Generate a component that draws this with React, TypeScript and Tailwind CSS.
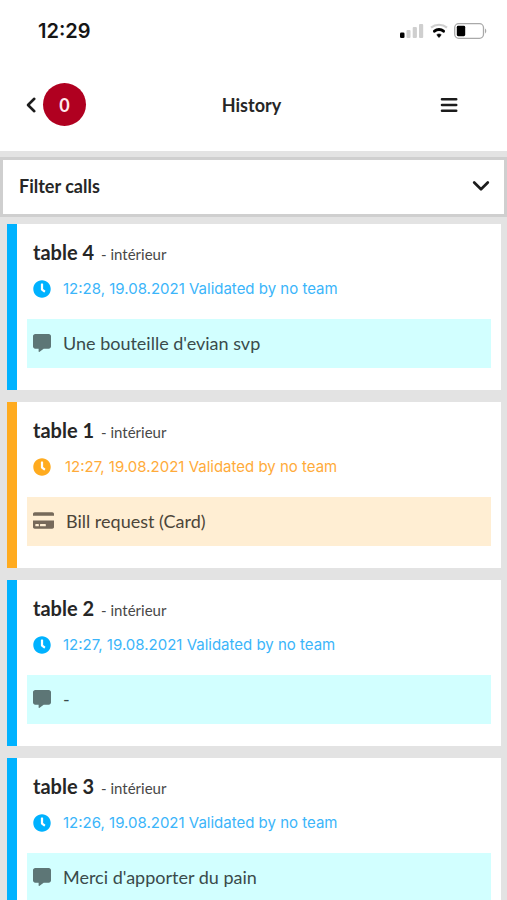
import { FaClock, FaCommentAlt, FaCreditCard } from 'react-icons/fa';
import clsx from 'clsx';

interface Call {
  id: number;
  table: string;
  area: string;
  time: string;
  kind: 'message' | 'bill';
  text: string;
}

const CALLS: Call[] = [
  { id: 1, table: 'table 4', area: 'intérieur', time: '12:28, 19.08.2021', kind: 'message', text: "Une bouteille d'evian svp" },
  { id: 2, table: 'table 1', area: 'intérieur', time: '12:27, 19.08.2021', kind: 'bill', text: 'Bill request (Card)' },
  { id: 3, table: 'table 2', area: 'intérieur', time: '12:27, 19.08.2021', kind: 'message', text: '-' },
  { id: 4, table: 'table 3', area: 'intérieur', time: '12:26, 19.08.2021', kind: 'message', text: "Merci d'apporter du pain" },
];

function StatusBar() {
  return (
    <div className="flex h-15 items-center justify-between pt-[2px] pr-5 pl-[38px]">
      <span className="font-['Inter',sans-serif] text-xl font-semibold text-[#161616]">12:29</span>
      <div className="flex items-center gap-[6px]">
        {/* Signal */}
        <svg width="24" height="16" viewBox="0 0 24 16" aria-hidden="true">
          <rect x="0" y="9.5" width="4.5" height="5.5" rx="1.3" fill="#000" />
          <rect x="6.5" y="7" width="4" height="8" rx="1" fill="#cfcfcf" />
          <rect x="12.7" y="4" width="4.2" height="11" rx="1" fill="#cfcfcf" />
          <rect x="19" y="1" width="4.2" height="14" rx="1" fill="#cfcfcf" />
        </svg>
        {/* Wi-Fi */}
        <svg width="18" height="16" viewBox="0 0 18 16" fill="none" aria-hidden="true">
          <path d="M1 4.6C5.6.8 12.4.8 17 4.6" stroke="#cfcfcf" strokeWidth="2.2" />
          <path d="M4.5 8.2C7 6 11 6 13.5 8.2" stroke="#000" strokeWidth="3" strokeLinecap="round" />
          <path d="M6.8 11.7C8 10.7 10 10.7 11.2 11.7L9.4 14.2Q9 14.7 8.6 14.2Z" fill="#000" stroke="#000" strokeWidth="0.6" strokeLinejoin="round" />
        </svg>
        {/* Battery */}
        <svg width="33" height="16" viewBox="0 0 33 16" fill="none" aria-hidden="true">
          <rect x="0.7" y="0.7" width="28.8" height="14.6" rx="4" stroke="#a9a9a9" strokeWidth="1.3" />
          <rect x="2.8" y="2.8" width="8.4" height="10.4" rx="1.4" fill="#000" />
          <path d="M31 5.6C32.7 6.3 32.7 9.7 31 10.4Z" fill="#a9a9a9" />
        </svg>
      </div>
    </div>
  );
}

function Header() {
  return (
    <header className="grid h-[91px] grid-cols-[1fr_auto_1fr] items-center pr-7 pb-[2px] pl-6">
      <div className="flex items-center gap-1">
        <button type="button" aria-label="Back" className="flex h-10 items-center">
          <svg width="15" height="18" viewBox="0 0 15 18" fill="none" aria-hidden="true">
            <path d="M10.3 2.8L4 9L10.3 15.2" stroke="#1c1c1c" strokeWidth="2.6" strokeLinecap="round" strokeLinejoin="round" />
          </svg>
        </button>
        <span className="flex size-[43px] items-center justify-center rounded-full bg-[#b00020] text-lg font-bold text-[#ffe9ec]">
          0
        </span>
      </div>
      <h1 className="text-lg font-bold">History</h1>
      <button type="button" aria-label="Menu" className="mr-5 justify-self-end">
        <svg width="20" height="20" viewBox="0 0 20 20" aria-hidden="true">
          <path d="M3 4.3H17.2M3 10H17.2M3 15.8H17.2" stroke="#1c1c1c" strokeWidth="2.6" strokeLinecap="round" />
        </svg>
      </button>
    </header>
  );
}

function CallCard({ call }: { call: Call }) {
  const isBill = call.kind === 'bill';

  return (
    <li className={clsx('border-l-10 bg-white pt-3 pr-[10px] pb-[22px] pl-[10px]', isBill ? 'border-[#ffab1f]' : 'border-[#00b2ff]')}>
      <h2 className="flex h-8 items-baseline gap-[7px] pl-[6px] text-[20px] leading-8 font-bold">
        {call.table}
        <span className="text-[15px] font-normal text-[#484848]">- {call.area}</span>
      </h2>
      <p
        className={clsx(
          "mt-[9px] flex h-6 items-center pl-[6px] font-['Inter',sans-serif] text-[15px]",
          isBill ? 'gap-[14px] text-[#ffab3a]' : 'gap-3 text-[#3bb5fa]',
        )}
      >
        <FaClock className={clsx('size-[18px] shrink-0', isBill ? 'text-[#ffab1f]' : 'text-[#00b2ff]')} />
        {call.time} Validated by no team
      </p>
      <div
        className={clsx(
          'mt-[18px] flex h-[49px] items-center gap-3 pb-[2px] pl-[6px] text-lg',
          isBill ? 'bg-[#ffeed3] text-[#4c4539]' : 'bg-[#d2ffff] text-[#3a4b4b]',
        )}
      >
        {isBill ? (
          <FaCreditCard className="size-[21px] shrink-0 text-[#76695a]" />
        ) : (
          <FaCommentAlt className="size-[18px] shrink-0 text-[#5d7676]" />
        )}
        {call.text}
      </div>
    </li>
  );
}

export default function App() {
  return (
    <div className="min-h-screen bg-[#e3e3e3] font-['Lato','Open_Sans',sans-serif] text-[#262626]">
      <div className="bg-white">
        <StatusBar />
        <Header />
      </div>
      <main className="pt-[6px]">
        <button
          type="button"
          aria-expanded={false}
          className="flex h-[60px] w-full items-center justify-between border-[3px] border-[#cfcfcf] bg-white pr-3 pb-[2px] pl-4 text-lg font-bold"
        >
          Filter calls
          <svg width="22" height="16" viewBox="0 0 22 16" fill="none" aria-hidden="true">
            <path d="M4.2 4.5L11 11.2L17.8 4.5" stroke="#1c1c1c" strokeWidth="2.7" strokeLinecap="round" strokeLinejoin="round" />
          </svg>
        </button>
        <ul className="flex flex-col gap-3 pt-[7px] pr-[6px] pl-[7px]">
          {CALLS.map((call) => (
            <CallCard key={call.id} call={call} />
          ))}
        </ul>
      </main>
    </div>
  );
}
